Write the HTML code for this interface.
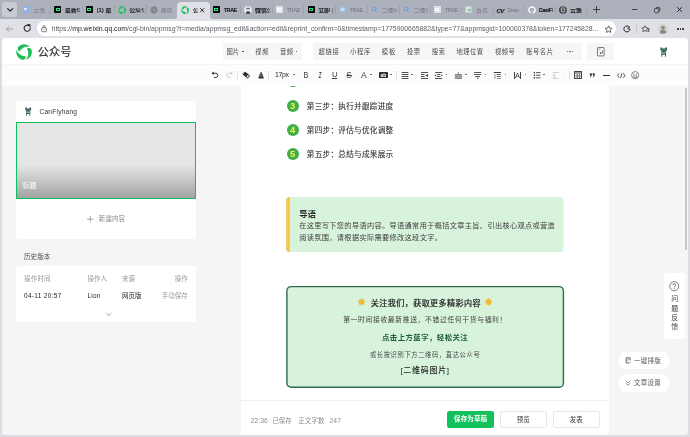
<!DOCTYPE html>
<html lang="zh-CN"><head><meta charset="utf-8"><title>公众号</title>
<style>
*{margin:0;padding:0;box-sizing:border-box}
html,body{width:690px;height:437px;overflow:hidden}
body{position:relative;background:#dbdde2;font-family:"Liberation Sans","Noto Sans CJK SC",sans-serif;color:#333}
.a{position:absolute;white-space:nowrap;line-height:1}
svg{position:absolute;overflow:visible}
#root{position:absolute;left:0;top:0;width:690px;height:437px;will-change:transform}
#tabbar{left:0;top:0;width:690px;height:18.5px;background:#adb1bb}
#addr{left:0;top:18.5px;width:690px;height:20px;background:#dfe1e6}
#pill{left:37px;top:21.4px;width:579.4px;height:15px;border-radius:7.5px;background:#fff}
#acttab{left:177.4px;top:2px;width:32.6px;height:16.5px;background:#dfe1e6;border-radius:4px 4px 0 0}
.flare{top:15.5px;width:3px;height:3px}
.tab{top:7.7px;font-size:5.9px;color:#111;overflow:hidden;height:7px;-webkit-text-stroke:0.2px #111;-webkit-mask-image:linear-gradient(90deg,#000 0,#000 80%,transparent 100%);mask-image:linear-gradient(90deg,#000 0,#000 80%,transparent 100%)}
.tab.f{color:#747880;-webkit-text-stroke:0}
.sep{top:5.3px;width:0.8px;height:8.4px;background:#9fa3ac}
#url{left:51.6px;top:25.7px;font-size:6.87px;color:#5c6066;letter-spacing:0}
#page{left:2px;top:38px;width:686px;height:396.6px;background:#f5f5f5;border-radius:4px 4px 3px 3px;overflow:hidden}
#hdr{left:0;top:0;width:686px;height:26px;background:#fff}
#tbar{left:0;top:26px;width:686px;height:21.5px;background:#fcfcfc;border-top:0.5px solid #f5f5f5}
.grp{top:5px;height:16.8px;background:#f6f6f6;border-radius:1.5px}
.ht{top:10px;font-size:6.3px;color:#4a4a4a}
.dot{width:1.3px;height:1.3px;border-radius:50%;background:#555}
</style></head><body>
<div id="root">
<div class="a" id="tabbar"></div><div class="a flare" style="left:174.4px;background:radial-gradient(circle at 0 0,transparent 2.9px,#dfe1e6 3.1px)"></div><div class="a flare" style="left:210px;background:radial-gradient(circle at 100% 0,transparent 2.9px,#dfe1e6 3.1px)"></div><div class="a" id="addr"></div><div class="a" id="acttab"></div><div class="a" id="pill"></div>
<div class="a" style="left:22.9px;top:6px;width:6.6000000000000005px;height:7.2px;background:#8fb0ee;border-radius:1px"><div class="a" style="left:1.6px;top:1.6px;width:2.4px;height:2px;background:#dfe8fb"></div></div>
<div class="a tab f" style="left:33.6px;width:15.9px">云笺</div>
<div class="a sep" style="left:50.1px"></div>
<div class="a" style="left:54.3px;top:6px;width:7.2px;height:7.2px;background:#0a0a0a;border-radius:0.8px"><div class="a" style="left:1.3px;top:2.1px;width:4.2px;height:2.8px;border:0.7px solid #32f08c;border-radius:0.4px"></div></div>
<div class="a tab" style="left:65.0px;width:16.1px">最新S</div>
<div class="a sep" style="left:81.7px"></div>
<div class="a" style="left:85.9px;top:6px;width:7.2px;height:7.2px;background:#0a0a0a;border-radius:0.8px"><div class="a" style="left:1.3px;top:2.1px;width:4.2px;height:2.8px;border:0.7px solid #32f08c;border-radius:0.4px"></div></div>
<div class="a tab" style="left:96.6px;width:17.1px">(1) 最</div>
<div class="a sep" style="left:114.3px"></div>
<svg style="left:117.8px;top:5.5px" width="8.2" height="8.2" viewBox="0 0 100 100"><g fill="#1fc05a"><path d="M16.7 42.9L13.6 38.6L11.4 33.9L10.4 28.9L10.7 24.2L12.6 20.0L15.5 16.7L18.7 13.6L22.2 10.8L26.0 8.4L30.0 6.4L34.1 4.7L38.4 3.4L42.8 2.5L47.2 2.1L51.7 2.0L56.1 2.4L60.5 3.2L64.8 4.3L69.0 5.9L73.0 7.9L76.8 10.2L80.4 12.9L83.7 15.9L86.8 19.1L86.8 19.1L82.0 17.6L77.3 16.7L72.8 16.2L68.5 16.1L64.5 16.4L60.7 17.0L57.2 17.9L54.0 19.0L51.0 20.2L48.3 21.6L45.9 23.0L43.6 24.5L41.5 25.9L39.5 27.2L37.5 28.3L35.5 29.6L33.7 31.0L32.0 32.6L30.5 34.4L29.1 36.3L27.9 38.3L26.9 40.4L26.1 42.6L25.5 44.8z"/><path d="M72.8 24.7L78.0 24.2L83.3 24.6L88.1 26.2L92.0 28.9L94.7 32.6L96.1 36.8L97.2 41.1L97.8 45.5L98.0 50.0L97.8 54.5L97.2 58.9L96.1 63.2L94.7 67.5L92.9 71.5L90.7 75.4L88.2 79.1L85.3 82.5L82.1 85.7L78.7 88.5L75.0 91.0L71.0 93.1L66.9 94.9L62.7 96.3L58.3 97.3L58.3 97.3L62.0 93.9L65.2 90.3L67.9 86.7L70.1 83.0L71.9 79.4L73.2 75.8L74.2 72.3L74.9 69.0L75.3 65.8L75.4 62.8L75.4 59.9L75.3 57.3L75.1 54.7L75.0 52.3L75.0 50.0L74.9 47.7L74.6 45.4L74.0 43.1L73.3 40.9L72.3 38.8L71.2 36.8L69.9 34.8L68.4 33.1L66.7 31.4z"/><path d="M60.5 82.3L58.4 87.2L55.3 91.5L51.6 94.9L47.3 96.9L42.8 97.4L38.4 96.6L34.1 95.3L30.0 93.6L26.0 91.6L22.2 89.2L18.7 86.4L15.5 83.3L12.5 80.0L9.9 76.4L7.6 72.5L5.7 68.5L4.2 64.3L3.0 60.0L2.3 55.6L2.0 51.1L2.1 46.7L2.6 42.2L3.6 37.8L4.9 33.6L4.9 33.6L6.0 38.5L7.5 43.0L9.3 47.2L11.3 50.9L13.6 54.3L16.0 57.2L18.6 59.8L21.1 62.1L23.7 64.0L26.2 65.6L28.7 67.0L31.1 68.3L33.3 69.4L35.5 70.5L37.5 71.7L39.6 72.7L41.7 73.6L44.0 74.3L46.2 74.7L48.5 75.0L50.9 75.0L53.2 74.8L55.5 74.4L57.7 73.8z"/></g></svg>
<div class="a tab" style="left:129.2px;width:15.9px">公众号</div>
<div class="a sep" style="left:145.7px"></div>
<svg style="left:149.5px;top:5.7px" width="7.800" height="7.800" viewBox="0 0 24 24"><g fill="none" stroke="#747880" stroke-width="2.400"><circle cx="12" cy="12" r="10"/><ellipse cx="12" cy="12" rx="4.5" ry="10"/><path d="M2 12h20M4 6.5h16M4 17.5h16"/></g></svg>
<div class="a tab f" style="left:160.6px;width:16.0px">湖南</div>
<svg style="left:180.70000000000002px;top:5.5px" width="8.2" height="8.2" viewBox="0 0 100 100"><g fill="#1fc05a"><path d="M16.7 42.9L13.6 38.6L11.4 33.9L10.4 28.9L10.7 24.2L12.6 20.0L15.5 16.7L18.7 13.6L22.2 10.8L26.0 8.4L30.0 6.4L34.1 4.7L38.4 3.4L42.8 2.5L47.2 2.1L51.7 2.0L56.1 2.4L60.5 3.2L64.8 4.3L69.0 5.9L73.0 7.9L76.8 10.2L80.4 12.9L83.7 15.9L86.8 19.1L86.8 19.1L82.0 17.6L77.3 16.7L72.8 16.2L68.5 16.1L64.5 16.4L60.7 17.0L57.2 17.9L54.0 19.0L51.0 20.2L48.3 21.6L45.9 23.0L43.6 24.5L41.5 25.9L39.5 27.2L37.5 28.3L35.5 29.6L33.7 31.0L32.0 32.6L30.5 34.4L29.1 36.3L27.9 38.3L26.9 40.4L26.1 42.6L25.5 44.8z"/><path d="M72.8 24.7L78.0 24.2L83.3 24.6L88.1 26.2L92.0 28.9L94.7 32.6L96.1 36.8L97.2 41.1L97.8 45.5L98.0 50.0L97.8 54.5L97.2 58.9L96.1 63.2L94.7 67.5L92.9 71.5L90.7 75.4L88.2 79.1L85.3 82.5L82.1 85.7L78.7 88.5L75.0 91.0L71.0 93.1L66.9 94.9L62.7 96.3L58.3 97.3L58.3 97.3L62.0 93.9L65.2 90.3L67.9 86.7L70.1 83.0L71.9 79.4L73.2 75.8L74.2 72.3L74.9 69.0L75.3 65.8L75.4 62.8L75.4 59.9L75.3 57.3L75.1 54.7L75.0 52.3L75.0 50.0L74.9 47.7L74.6 45.4L74.0 43.1L73.3 40.9L72.3 38.8L71.2 36.8L69.9 34.8L68.4 33.1L66.7 31.4z"/><path d="M60.5 82.3L58.4 87.2L55.3 91.5L51.6 94.9L47.3 96.9L42.8 97.4L38.4 96.6L34.1 95.3L30.0 93.6L26.0 91.6L22.2 89.2L18.7 86.4L15.5 83.3L12.5 80.0L9.9 76.4L7.6 72.5L5.7 68.5L4.2 64.3L3.0 60.0L2.3 55.6L2.0 51.1L2.1 46.7L2.6 42.2L3.6 37.8L4.9 33.6L4.9 33.6L6.0 38.5L7.5 43.0L9.3 47.2L11.3 50.9L13.6 54.3L16.0 57.2L18.6 59.8L21.1 62.1L23.7 64.0L26.2 65.6L28.7 67.0L31.1 68.3L33.3 69.4L35.5 70.5L37.5 71.7L39.6 72.7L41.7 73.6L44.0 74.3L46.2 74.7L48.5 75.0L50.9 75.0L53.2 74.8L55.5 74.4L57.7 73.8z"/></g></svg>
<div class="a tab" style="left:193.1px;width:5.2px">公</div>
<div class="a" style="left:212.9px;top:6px;width:7.2px;height:7.2px;background:#0a0a0a;border-radius:0.8px"><div class="a" style="left:1.3px;top:2.1px;width:4.2px;height:2.8px;border:0.7px solid #32f08c;border-radius:0.4px"></div></div>
<div class="a tab" style="left:223.6px;width:15.9px;font-size:5.7px;letter-spacing:-0.5px;top:7.9px">TRAE</div>
<div class="a sep" style="left:240.1px"></div>
<svg style="left:244.3px;top:5.7px" width="7.8" height="7.8" viewBox="0 0 24 24"><circle cx="12" cy="12" r="12" fill="#dde9f3"/><path d="M6 24c0-6 3-8 6.500-8s6.500 2 6.500 8z" fill="#2b3140"/><circle cx="12.500" cy="11" r="4.400" fill="#efd2bd"/><path d="M7 11c-1-7 11-8 11-1c-2-2.500-5-3-7-2.500c-2 .5-3 2-4 3.500z" fill="#1d1d1f"/></svg>
<div class="a tab" style="left:255.0px;width:16.1px">微信公</div>
<div class="a sep" style="left:271.7px"></div>
<div class="a" style="left:275.9px;top:6px;width:7.2px;height:7.2px;background:#dfe2e6;border-radius:0.8px"><div class="a" style="left:1.3px;top:2.1px;width:4.2px;height:2.8px;border:0.7px solid #fff;border-radius:0.4px"></div></div>
<div class="a tab f" style="left:286.6px;width:16.1px;font-size:5.7px;letter-spacing:-0.5px;top:7.9px">TRAE</div>
<div class="a sep" style="left:303.3px"></div>
<div class="a" style="left:307.5px;top:6px;width:7.2px;height:7.2px;background:#0a0a0a;border-radius:0.8px"><div class="a" style="left:1.3px;top:2.1px;width:4.2px;height:2.8px;border:0.7px solid #32f08c;border-radius:0.4px"></div></div>
<div class="a tab" style="left:318.2px;width:15.9px">立即下</div>
<div class="a sep" style="left:334.7px"></div>
<svg style="left:338.9px;top:6px" width="7.2" height="7.2" viewBox="0 0 24 24"><circle cx="12" cy="12" r="10" fill="#9cc3ee"/><path d="M4 12c4-6 12-6 16 0c-4 5-12 5-16 0z" fill="#d5e6f8"/></svg>
<div class="a tab f" style="left:349.6px;width:16.5px;font-size:5.7px;letter-spacing:-0.5px;top:7.9px">TRAE</div>
<div class="a sep" style="left:366.7px"></div>
<svg style="left:370.9px;top:6px" width="7.2" height="7.2" viewBox="0 0 24 24"><g fill="none" stroke="#5b9ee6" stroke-width="3" stroke-linecap="round"><circle cx="10" cy="10" r="6.5"/><path d="M15 15l6 6"/></g></svg>
<div class="a tab f" style="left:381.6px;width:16.5px">二维码</div>
<div class="a sep" style="left:398.7px"></div>
<svg style="left:402.9px;top:6px" width="7.2" height="7.2" viewBox="0 0 24 24"><g fill="none" stroke="#5b9ee6" stroke-width="3" stroke-linecap="round"><circle cx="10" cy="10" r="6.5"/><path d="M15 15l6 6"/></g></svg>
<div class="a tab f" style="left:413.6px;width:15.5px">二维码</div>
<div class="a sep" style="left:429.7px"></div>
<div class="a" style="left:433.9px;top:6px;width:7.2px;height:7.2px;background:#dfe2e6;border-radius:0.8px"><div class="a" style="left:1.3px;top:2.1px;width:4.2px;height:2.8px;border:0.7px solid #fff;border-radius:0.4px"></div></div>
<div class="a tab f" style="left:444.6px;width:15.9px;font-size:5.7px;letter-spacing:-0.5px;top:7.9px">TRAE</div>
<div class="a sep" style="left:461.1px"></div>
<div class="a" style="left:465.29999999999995px;top:6px;width:7.2px;height:7.2px;background:#d6e6dc;border-radius:1px;border:0.5px solid #b9d3c4"><div class="a" style="left:1.7px;top:2px;width:2.6px;height:2.2px;background:#7dc69a;border-radius:0.4px"></div></div>
<div class="a tab f" style="left:476.0px;width:15.9px">首页</div>
<div class="a sep" style="left:492.5px"></div>
<div class="a" style="left:496.5px;top:7.5px;font-size:6px;font-weight:bold;font-style:italic;color:#2e3136;letter-spacing:-0.5px;-webkit-text-stroke:0.25px #2e3136">CV</div>
<div class="a tab f" style="left:507.4px;width:15.7px;font-size:5.7px;letter-spacing:-0.5px;top:7.9px">Deep</div>
<div class="a sep" style="left:523.7px"></div>
<svg style="left:527.6px;top:5.7px" width="8.0" height="8.0" viewBox="0 0 24 24"><path fill="#fff" d="M12 .5C5.65.5.5 5.65.5 12c0 5.1 3.3 9.400 7.900 10.900.6.100.8-.25.800-.55v-2c-3.200.7-3.900-1.550-3.900-1.550-.5-1.350-1.300-1.700-1.300-1.700-1.050-.7.100-.7.100-.7 1.150.1 1.750 1.200 1.750 1.200 1 1.750 2.700 1.250 3.350.95.100-.75.400-1.250.7-1.550-2.550-.3-5.250-1.300-5.250-5.700 0-1.250.45-2.300 1.200-3.100-.1-.3-.5-1.450.100-3.050 0 0 .950-.3 3.150 1.200.9-.25 1.900-.4 2.900-.4s2 .15 2.900.4c2.200-1.500 3.150-1.200 3.150-1.200.6 1.600.2 2.750.1 3.050.75.800 1.200 1.850 1.200 3.100 0 4.400-2.700 5.400-5.250 5.700.4.350.8 1.050.8 2.100v3.150c0 .3.200.65.800.55C20.200 21.400 23.500 17.100 23.500 12 23.500 5.650 18.350.5 12 .5z"/></svg>
<div class="a tab" style="left:538.6px;width:15.9px;font-size:5.7px;letter-spacing:-0.5px;top:7.9px;font-weight:bold;letter-spacing:-0.25px">CanFl</div>
<div class="a sep" style="left:555.1px"></div>
<svg style="left:559.3px;top:6px" width="7.8" height="7.8" viewBox="0 0 24 24"><circle cx="12" cy="12" r="11.5" fill="#1a1a1a"/><g fill="none" stroke="#e8e8e8" stroke-width="1.8"><ellipse cx="12" cy="12" rx="4.5" ry="10"/><path d="M2 12h20M4 6.5h16M4 17.5h16"/></g></svg>
<div class="a tab" style="left:570.0px;width:15.7px">云笺</div>
<div class="a sep" style="left:586.3px"></div>
<div class="a" style="left:2.2px;top:2.2px;width:14.8px;height:14.8px;background:#c8cbd1;border-radius:3px"></div>
<svg style="left:6.5px;top:8.1px" width="6.300" height="3.800" viewBox="0 0 10 6"><path d="M1 1l4 4 4-4" fill="none" stroke="#222" stroke-width="1.800" stroke-linecap="round" stroke-linejoin="round"/></svg>
<svg style="left:199.900px;top:7.600px" width="4.400" height="4.400" viewBox="0 0 10 10"><path d="M1 1l8 8M9 1l-8 8" stroke="#111" stroke-width="2" stroke-linecap="round"/></svg>
<svg style="left:592.7px;top:6.2px" width="7" height="7" viewBox="0 0 10 10"><path d="M5 0v10M0 5h10" stroke="#222" stroke-width="1.1"/></svg>
<svg style="left:632px;top:9.2px" width="5.2" height="1" viewBox="0 0 10 2"><path d="M0 1h10" stroke="#222" stroke-width="1.6"/></svg>
<svg style="left:653.700px;top:6.600px" width="6.200" height="6.200" viewBox="0 0 10 10"><rect x="0.8" y="2.4" width="6.800" height="6.800" rx="1.600" fill="none" stroke="#222" stroke-width="1.200"/><path d="M3 2.2V2a1.400 1.400 0 0 1 1.400-1.400h3.200A1.800 1.800 0 0 1 9.400 2.400v3.200A1.400 1.400 0 0 1 8 7" fill="none" stroke="#222" stroke-width="1.200"/></svg>
<svg style="left:676.6px;top:7.2px" width="5" height="5" viewBox="0 0 10 10"><path d="M0.500 0.500l9 9M9.500 0.500l-9 9" stroke="#1a1a1a" stroke-width="1.900"/></svg>
<svg style="left:6px;top:25.7px" width="7.2" height="6" viewBox="0 0 12 10"><path d="M5 1L1 5l4 4M1 5h10.500" fill="none" stroke="#8b8e94" stroke-width="1.25" stroke-linecap="round" stroke-linejoin="round"/></svg>
<svg style="left:22.800px;top:24.400px" width="8.400" height="8.400" viewBox="0 0 12 12"><path d="M10.400 6A4.400 4.400 0 1 1 8.900 2.700" fill="none" stroke="#222" stroke-width="1.500" stroke-linecap="round"/><path d="M6.900 1.100h3.100v3.100" fill="none" stroke="#222" stroke-width="1.500" stroke-linecap="round" stroke-linejoin="round"/></svg>
<svg style="left:41px;top:24.700px" width="6.200" height="7.300" viewBox="0 0 10 12"><rect x="1" y="4.600" width="8" height="6.400" rx="1.300" fill="none" stroke="#444" stroke-width="1.100"/><path d="M3 4.600V3a2 2 0 0 1 4 0v1.600" fill="none" stroke="#444" stroke-width="1.100"/><circle cx="5" cy="7.800" r="0.800" fill="#444"/></svg>
<div class="a" id="url">https://<span style="color:#1d1d1d">mp.weixin.qq.com</span>/cgi-bin/appmsg?t=media/appmsg_edit&amp;action=edit&amp;reprint_confirm=0&amp;timestamp=1775900665882&amp;type=77&amp;appmsgid=100000378&amp;token=177245828...</div>
<svg style="left:603.900px;top:24.500px" width="9.200" height="8.600" viewBox="0 0 24 24"><path d="M12 2.500l2.900 6.200 6.600.8-4.900 4.600 1.300 6.700L12 17.500l-5.900 3.300 1.300-6.700-4.900-4.600 6.600-.8z" fill="none" stroke="#333" stroke-width="2" stroke-linejoin="round"/></svg>
<svg style="left:622.600px;top:25.200px" width="7.800" height="7.800" viewBox="0 0 24 24"><path d="M19.500 6.500A9.300 9.300 0 1 0 21.200 13.500" fill="none" stroke="#222" stroke-width="3" stroke-linecap="round"/><path d="M21.500 13.500L14 10.500l5.500-4" fill="none" stroke="#222" stroke-width="2.600" stroke-linejoin="round" stroke-linecap="round"/></svg>
<div class="a" style="left:635.500px;top:24.600px;width:1px;height:8.600px;background:#c6c8ce"></div>
<svg style="left:640.800px;top:25.200px" width="8.800" height="7.800" viewBox="0 0 26 24"><path d="M11.500 2l3 6.300 6.800.8-5 4.700 1.300 6.800-6.100-3.400-6.100 3.400 1.300-6.800-5-4.700 6.800-.8z" fill="none" stroke="#2a2a2a" stroke-width="2.100" stroke-linejoin="round"/><path d="M18.500 11.500h6.500M19 15.200h6M19.500 19h5.500" stroke="#2a2a2a" stroke-width="1.800"/><path d="M17 10.500h4v10h-4z" fill="#dfe1e6"/><path d="M18.500 11.500h6.500M18.500 15.200h6.500M19 19h6" stroke="#2a2a2a" stroke-width="1.800"/></svg>
<svg style="left:658.300px;top:24.200px" width="10" height="10" viewBox="0 0 24 24"><circle cx="12" cy="12" r="12" fill="#d5d3d1"/><circle cx="12" cy="9" r="4.600" fill="#8d8a87"/><path d="M3.500 20.500c1-5 5-6.500 8.500-6.500s7.500 1.500 8.500 6.500A12 12 0 0 1 3.500 20.500z" fill="#8d8a87"/></svg>
<div class="a" style="left:677.0px;top:28px;width:1.500px;height:1.500px;border-radius:50%;background:#222"></div>
<div class="a" style="left:679.6px;top:28px;width:1.500px;height:1.500px;border-radius:50%;background:#222"></div>
<div class="a" style="left:682.2px;top:28px;width:1.500px;height:1.500px;border-radius:50%;background:#222"></div>
<div class="a" id="page">
<div class="a" id="hdr"></div><div class="a" id="tbar"></div>
<svg style="left:13.90px;top:5.60px" width="16.2" height="16.2" viewBox="0 0 100 100"><g fill="#1ebe57"><path d="M16.7 42.9L13.6 38.6L11.4 33.9L10.4 28.9L10.7 24.2L12.6 20.0L15.5 16.7L18.7 13.6L22.2 10.8L26.0 8.4L30.0 6.4L34.1 4.7L38.4 3.4L42.8 2.5L47.2 2.1L51.7 2.0L56.1 2.4L60.5 3.2L64.8 4.3L69.0 5.9L73.0 7.9L76.8 10.2L80.4 12.9L83.7 15.9L86.8 19.1L86.8 19.1L82.0 17.6L77.3 16.7L72.8 16.2L68.5 16.1L64.5 16.4L60.7 17.0L57.2 17.9L54.0 19.0L51.0 20.2L48.3 21.6L45.9 23.0L43.6 24.5L41.5 25.9L39.5 27.2L37.5 28.3L35.5 29.6L33.7 31.0L32.0 32.6L30.5 34.4L29.1 36.3L27.9 38.3L26.9 40.4L26.1 42.6L25.5 44.8z"/><path d="M72.8 24.7L78.0 24.2L83.3 24.6L88.1 26.2L92.0 28.9L94.7 32.6L96.1 36.8L97.2 41.1L97.8 45.5L98.0 50.0L97.8 54.5L97.2 58.9L96.1 63.2L94.7 67.5L92.9 71.5L90.7 75.4L88.2 79.1L85.3 82.5L82.1 85.7L78.7 88.5L75.0 91.0L71.0 93.1L66.9 94.9L62.7 96.3L58.3 97.3L58.3 97.3L62.0 93.9L65.2 90.3L67.9 86.7L70.1 83.0L71.9 79.4L73.2 75.8L74.2 72.3L74.9 69.0L75.3 65.8L75.4 62.8L75.4 59.9L75.3 57.3L75.1 54.7L75.0 52.3L75.0 50.0L74.9 47.7L74.6 45.4L74.0 43.1L73.3 40.9L72.3 38.8L71.2 36.8L69.9 34.8L68.4 33.1L66.7 31.4z"/><path d="M60.5 82.3L58.4 87.2L55.3 91.5L51.6 94.9L47.3 96.9L42.8 97.4L38.4 96.6L34.1 95.3L30.0 93.6L26.0 91.6L22.2 89.2L18.7 86.4L15.5 83.3L12.5 80.0L9.9 76.4L7.6 72.5L5.7 68.5L4.2 64.3L3.0 60.0L2.3 55.6L2.0 51.1L2.1 46.7L2.6 42.2L3.6 37.8L4.9 33.6L4.9 33.6L6.0 38.5L7.5 43.0L9.3 47.2L11.3 50.9L13.6 54.3L16.0 57.2L18.6 59.8L21.1 62.1L23.7 64.0L26.2 65.6L28.7 67.0L31.1 68.3L33.3 69.4L35.5 70.5L37.5 71.7L39.6 72.7L41.7 73.6L44.0 74.3L46.2 74.7L48.5 75.0L50.9 75.0L53.2 74.8L55.5 74.4L57.7 73.8z"/></g></svg>
<div class="a" style="left:35.80px;top:8.60px;font-size:11.2px;font-weight:400;color:#333;letter-spacing:0px;-webkit-text-stroke:0.22px #333">公众号</div>
<div class="a grp" style="left:220.5px;width:79.0px"></div>
<div class="a grp" style="left:311.0px;width:268.8px"></div>
<div class="a grp" style="left:585.0px;width:26.5px"></div>
<div class="a ht" style="left:224.50px;top:11.30px;letter-spacing:-0.10px">图片</div>
<div class="a ht" style="left:253.20px;top:11.30px;letter-spacing:0.80px">视频</div>
<div class="a ht" style="left:278.00px;top:11.30px;letter-spacing:0.40px">音频</div>
<div class="a ht" style="left:316.60px;top:11.30px;letter-spacing:0.60px">超链接</div>
<div class="a ht" style="left:348.00px;top:11.30px;letter-spacing:0.70px">小程序</div>
<div class="a ht" style="left:379.80px;top:11.30px;letter-spacing:0.80px">模板</div>
<div class="a ht" style="left:404.90px;top:11.30px;letter-spacing:0.50px">投票</div>
<div class="a ht" style="left:429.70px;top:11.30px;letter-spacing:0.70px">搜索</div>
<div class="a ht" style="left:454.60px;top:11.30px;letter-spacing:0.40px">地理位置</div>
<div class="a ht" style="left:492.90px;top:11.30px;letter-spacing:0.45px">视频号</div>
<div class="a ht" style="left:524.20px;top:11.30px;letter-spacing:0.53px">账号名片</div>
<div class="a" style="left:240.40px;top:13.20px;width:1.2px;height:1.2px;border-radius:50%;background:#444"></div>
<div class="a" style="left:293.80px;top:13.20px;width:1.2px;height:1.2px;border-radius:50%;background:#444"></div>
<div class="a" style="left:564.80px;top:13.20px;width:1.2px;height:1.2px;border-radius:50%;background:#555"></div>
<div class="a" style="left:567.40px;top:13.20px;width:1.2px;height:1.2px;border-radius:50%;background:#555"></div>
<div class="a" style="left:570.00px;top:13.20px;width:1.2px;height:1.2px;border-radius:50%;background:#555"></div>
<svg style="left:594.60px;top:9.00px" width="7.600" height="9.400" viewBox="0 0 16 20"><rect x="1" y="1" width="14" height="18" rx="1.500" fill="none" stroke="#444" stroke-width="1.500"/><path d="M4 4.500h3M11.500 8v5h-5M8.500 10.800L6.300 13l2.200 2.200" fill="none" stroke="#444" stroke-width="1.400"/></svg>
<svg style="left:656.60px;top:9.40px" width="9.4" height="10.34" viewBox="0 0 10 10" preserveAspectRatio="none"><path d="M1.500 0.500h2v1h3V0.500h2v3h-1v6H6.500V7.500h-3V9.500H2.500V3.500h-1z" fill="#3d5a63"/><path d="M3 2.200h1.200v1.800H3zM5.800 2.200H7v1.800H5.800z" fill="#2fae5a"/><path d="M3.200 5h3.600v1.600H3.200z" fill="#9fb2b5"/></svg>
<svg style="left:209.10px;top:33.40px" width="7.6" height="7.6" viewBox="0 0 13.500 12.500"><path d="M3.200 3.600h5.300a3.700 3.700 0 0 1 0 7.400H5.200" fill="none" stroke="#2e2e2e" stroke-width="1.700"/><path d="M4.800 0.600L1 3.600l3.800 3z" fill="#2e2e2e"/></svg>
<svg style="left:223.50px;top:33.40px;transform:scaleX(-1)" width="7.600" height="7.600" viewBox="0 0 13.500 12.500"><path d="M3.200 3.600h5.300a3.700 3.700 0 0 1 0 7.400H5.200" fill="none" stroke="#cdcdcd" stroke-width="1.700"/><path d="M4.800 0.600L1 3.600l3.800 3z" fill="#cdcdcd"/></svg>
<div class="a" style="left:235.30px;top:32.60px;width:0.8px;height:9.2px;background:#e4e4e4"></div>
<div class="a" style="left:266.40px;top:32.60px;width:0.8px;height:9.2px;background:#e4e4e4"></div>
<div class="a" style="left:394.00px;top:32.60px;width:0.8px;height:9.2px;background:#e4e4e4"></div>
<div class="a" style="left:567.20px;top:32.60px;width:0.8px;height:9.2px;background:#e4e4e4"></div>
<svg style="left:239.60px;top:33.00px" width="8.6" height="8.2" viewBox="0 0 17 16"><g transform="rotate(38 8.500 8)"><rect x="2.200" y="4" width="13" height="7.600" rx="1.300" fill="#2e2e2e"/><rect x="10.800" y="5.300" width="2.400" height="5" fill="#fcfcfc"/></g><path d="M2.600 3.400L1 5" stroke="#2e2e2e" stroke-width="1.500"/></svg>
<svg style="left:255.60px;top:33.60px" width="6.2" height="6.8" viewBox="0 0 12 13"><path d="M4.600 0.500h2.800v3.600h1.900l1.900 8.400H.800l1.900-8.400h1.900z" fill="#2e2e2e"/><path d="M2 7.300h8" stroke="#fcfcfc" stroke-width="1"/></svg>
<div class="a" style="left:273.00px;top:33.80px;font-size:6.9px;letter-spacing:-0.32px;color:#262626">17px</div>
<div class="a" style="left:291.38px;top:36.03px;width:1.44px;height:1.44px;border-radius:50%;background:#5a5a5a"></div>
<div class="a" style="left:299.20px;top:33.05px;width:10px;text-align:center;font-size:8.3px;color:#3a3a3a;transform:scaleX(0.86)">B</div>
<div class="a" style="left:313.20px;top:34.20px;width:10px;text-align:center;font-size:8.3px;color:#3a3a3a;font-style:italic;font-family:'Liberation Mono',monospace;transform:scaleX(0.8)">I</div>
<div class="a" style="left:327.70px;top:33.10px;width:10px;text-align:center;font-size:7.6px;color:#3a3a3a;">U</div>
<div class="a" style="left:330.20px;top:40.30px;width:5px;height:0.8px;background:#3a3a3a"></div>
<div class="a" style="left:342.10px;top:33.05px;width:10px;text-align:center;font-size:8.3px;color:#3a3a3a;text-decoration:line-through;text-decoration-thickness:0.700px">S</div>
<div class="a" style="left:356.80px;top:32.90px;width:10px;text-align:center;font-size:8.6px;color:#3a3a3a;">A</div>
<div class="a" style="left:368.28px;top:36.03px;width:1.44px;height:1.44px;border-radius:50%;background:#5a5a5a"></div>
<div class="a" style="left:377.10px;top:33.90px;width:8.600px;height:6.600px;background:#2e2e2e;border-radius:0.700px;color:#fff;font-size:5px;text-align:center;line-height:6px;font-weight:bold">ab</div>
<div class="a" style="left:388.08px;top:36.03px;width:1.44px;height:1.44px;border-radius:50%;background:#5a5a5a"></div>
<svg style="left:399px;top:33px" width="10" height="10" viewBox="0 0 10 10"><rect x="0.6" y="1" width="6.8" height="1" fill="#555"/><rect x="0.6" y="3" width="6.8" height="1" fill="#555"/><rect x="0.6" y="5" width="6.8" height="1" fill="#555"/><rect x="0.6" y="7" width="6.8" height="1" fill="#555"/></svg>
<div class="a" style="left:409.48px;top:36.03px;width:1.44px;height:1.44px;border-radius:50%;background:#5a5a5a"></div>
<svg style="left:418px;top:33px" width="10" height="10" viewBox="0 0 10 10"><rect x="0.9" y="1" width="7.1" height="1" fill="#555"/><rect x="0.9" y="7" width="7.1" height="1" fill="#555"/><rect x="0.9" y="3" width="3.7" height="1" fill="#555"/><rect x="0.9" y="5" width="3.7" height="1" fill="#555"/><path d="M5.500 4.500L8 3.100v2.800z" fill="#333"/></svg>
<svg style="left:432px;top:33px" width="10" height="10" viewBox="0 0 10 10"><rect x="1" y="1" width="7.2" height="1" fill="#555"/><rect x="1" y="7" width="7.2" height="1" fill="#555"/><rect x="2.8" y="3" width="3.6" height="1" fill="#555"/><rect x="2.8" y="5" width="3.6" height="1" fill="#555"/><path d="M1 3.600l1.300.9L1 5.400zM8.200 3.600l-1.300.9 1.300.9z" fill="#333"/></svg>
<div class="a" style="left:443.78px;top:36.03px;width:1.44px;height:1.44px;border-radius:50%;background:#5a5a5a"></div>
<svg style="left:452px;top:33px" width="10" height="10" viewBox="0 0 10 10"><path d="M3.700 2.400l.8-1.300.8 1.300z" fill="#444"/><rect x="0.900" y="3.100" width="7.100" height="4.800" fill="#a9a9a9"/><rect x="0.9" y="3.1" width="7.1" height="0.8" fill="#7a7a7a"/><rect x="0.9" y="5.1" width="7.1" height="0.7" fill="#8a8a8a"/><rect x="0.9" y="7.1" width="7.1" height="0.8" fill="#7a7a7a"/></svg>
<div class="a" style="left:463.48px;top:36.03px;width:1.44px;height:1.44px;border-radius:50%;background:#5a5a5a"></div>
<svg style="left:471px;top:33px" width="10" height="10" viewBox="0 0 10 10"><rect x="1.1" y="1" width="7.1" height="1" fill="#555"/><rect x="1.1" y="3" width="7.1" height="1" fill="#555"/><rect x="2.3" y="5" width="4.7" height="1" fill="#555"/><path d="M3.600 6.800h2.200L4.700 8.200z" fill="#444"/></svg>
<div class="a" style="left:482.98px;top:36.03px;width:1.44px;height:1.44px;border-radius:50%;background:#5a5a5a"></div>
<svg style="left:491px;top:33px" width="10" height="10" viewBox="0 0 10 10"><rect x="0.8" y="1" width="7.1" height="1" fill="#3a3a3a"/><rect x="0.800" y="3" width="2.200" height="5" fill="#c9c9c9"/><rect x="3.8" y="3" width="4.1" height="1" fill="#6a6a6a"/><rect x="3.8" y="5" width="4.1" height="1" fill="#6a6a6a"/><rect x="3.8" y="7" width="4.1" height="1" fill="#8a8a8a"/></svg>
<div class="a" style="left:502.58px;top:36.03px;width:1.44px;height:1.44px;border-radius:50%;background:#5a5a5a"></div>
<div class="a" style="left:511.70px;top:33.90px;width:0.9px;height:7px;background:#444"></div>
<div class="a" style="left:518.40px;top:33.90px;width:0.9px;height:7px;background:#444"></div>
<div class="a" style="left:510.50px;top:33.70px;width:10px;text-align:center;font-size:7.200px;color:#333">A</div>
<div class="a" style="left:522.58px;top:36.03px;width:1.44px;height:1.44px;border-radius:50%;background:#5a5a5a"></div>
<svg style="left:531px;top:33px" width="10" height="10" viewBox="0 0 10 10"><rect x="0.700" y="0.9" width="1.400" height="1.400" fill="#3a3a3a"/><rect x="3" y="1.1" width="4.5" height="1" fill="#555"/><rect x="0.700" y="3.5" width="1.400" height="1.400" fill="#3a3a3a"/><rect x="3" y="3.7" width="4.5" height="1" fill="#555"/><rect x="0.700" y="6.1" width="1.400" height="1.400" fill="#3a3a3a"/><rect x="3" y="6.3" width="4.5" height="1" fill="#555"/></svg>
<div class="a" style="left:541.28px;top:36.03px;width:1.44px;height:1.44px;border-radius:50%;background:#5a5a5a"></div>
<svg style="left:550px;top:33px" width="10" height="10" viewBox="0 0 10 10"><rect x="0.7" y="1" width="6.6" height="1" fill="#d4d4d4"/><rect x="0.700" y="2.700" width="3" height="4" fill="#dedede"/><rect x="0.7" y="7" width="6.6" height="1" fill="#d4d4d4"/></svg>
<div class="a" style="left:560.58px;top:36.03px;width:1.44px;height:1.44px;border-radius:50%;background:#d0d0d0"></div>
<svg style="left:572px;top:33px" width="10" height="10" viewBox="0 0 10 10"><rect x="0.500" y="0.500" width="7" height="7" fill="#fff" stroke="#444" stroke-width="1"/><rect x="1" y="1" width="6" height="1.800" fill="#9a9a9a"/><path d="M3.100 2.800v4.200M5.300 2.800v4.200" stroke="#4a4a4a" stroke-width="0.900"/><path d="M1 5h6" stroke="#6a6a6a" stroke-width="0.800"/></svg>
<svg style="left:586.75px;top:35.15px" width="6.4" height="4.7" viewBox="0 0 14 11"><path d="M1 3.200a2.700 2.700 0 1 1 5.400 0c0 3.300-1.700 5.600-4.200 7.300l-.9-1c1.300-1 2.100-2.100 2.300-3.700A2.700 2.700 0 0 1 1 3.200zM7.800 3.200a2.700 2.700 0 1 1 5.400 0c0 3.300-1.700 5.600-4.200 7.300l-.9-1c1.300-1 2.100-2.100 2.300-3.700A2.700 2.700 0 0 1 7.800 3.200z" fill="#262626"/></svg>
<div class="a" style="left:601.00px;top:37.00px;width:7px;height:1.100px;background:#333"></div>
<svg style="left:614.75px;top:34.85px" width="8.6" height="5.2" viewBox="0 0 18 11"><path d="M4.500 1L1 5.500 4.500 10M13.500 1L17 5.500 13.500 10M10.500 0.500L7.500 10.500" fill="none" stroke="#2a2a2a" stroke-width="1.700"/></svg>
<svg style="left:628.85px;top:32.95px" width="8.4" height="8.4" viewBox="0 0 16 16"><circle cx="8" cy="8" r="7" fill="none" stroke="#3a3a3a" stroke-width="1.100"/><path d="M5.400 4.600v3M10.600 4.600v3M4.600 9.400h6.800v.8a2.600 2.600 0 0 1-2.600 2.600H7.200a2.600 2.600 0 0 1-2.600-2.600z" fill="none" stroke="#3a3a3a" stroke-width="1.050"/></svg>
<div class="a" style="left:14.00px;top:62.60px;width:179.5px;height:138.4px;background:#fff;border-radius:2.5px"></div>
<svg style="left:22.40px;top:69.40px" width="8.4" height="9.24" viewBox="0 0 10 10" preserveAspectRatio="none"><path d="M1.500 0.500h2v1h3V0.500h2v3h-1v6H6.500V7.500h-3V9.500H2.500V3.500h-1z" fill="#3d5a63"/><path d="M3 2.200h1.200v1.800H3zM5.800 2.200H7v1.800H5.800z" fill="#2fae5a"/><path d="M3.200 5h3.600v1.600H3.200z" fill="#9fb2b5"/></svg>
<div class="a" style="left:37.50px;top:70.90px;font-size:6.6px;letter-spacing:0.22px;color:#333">CanFlyhang</div>
<div class="a" style="left:14.00px;top:83.80px;width:179.5px;height:76.8px;border:1px solid #0fc05f;background:linear-gradient(#e6e6e6 0%,#e6e6e6 55%,#c6c6c6 77%,#a2a2a2 100%)"></div>
<div class="a" style="left:20.60px;top:144.00px;font-size:7px;color:#fff">标题</div>
<svg style="left:85.20px;top:177.70px" width="6.400" height="6.400" viewBox="0 0 10 10"><path d="M5 0v10M0 5h10" stroke="#777" stroke-width="1"/></svg>
<div class="a" style="left:96.80px;top:178.00px;font-size:6.5px;color:#8a8a8a;letter-spacing:0.1px">新建内容</div>
<div class="a" style="left:22.00px;top:215.90px;font-size:6.6px;color:#4d4d4d">历史版本</div>
<div class="a" style="left:14.00px;top:228.00px;width:179.700px;height:55.500px;background:#fff;border-radius:2.500px"></div>
<div class="a" style="left:22.00px;top:237.50px;font-size:6.5px;color:#9a9a9a;letter-spacing:0.2px">操作时间</div>
<div class="a" style="left:85.50px;top:237.50px;font-size:6.5px;color:#9a9a9a">操作人</div>
<div class="a" style="left:119.90px;top:237.50px;font-size:6.5px;color:#9a9a9a">来源</div>
<div class="a" style="left:158.00px;top:237.50px;width:27.800px;text-align:right;font-size:6.5px;color:#9a9a9a">操作</div>
<div class="a" style="left:22.00px;top:254.70px;font-size:6.4px;letter-spacing:0.36px;color:#222">04-11 20:57</div>
<div class="a" style="left:85.50px;top:254.70px;font-size:6.4px;letter-spacing:0.25px;color:#222">Lion</div>
<div class="a" style="left:119.90px;top:255.30px;font-size:6.5px;color:#222">网页版</div>
<div class="a" style="left:158.00px;top:255.30px;width:27.800px;text-align:right;font-size:6.5px;color:#9a9a9a">手动保存</div>
<svg style="left:104.40px;top:275.20px" width="5.600" height="3" viewBox="0 0 10 5.500"><path d="M0.600 0.600L5 4.600 9.400 0.600" fill="none" stroke="#6a6a6a" stroke-width="1.200"/></svg>
<div class="a" style="left:239.20px;top:47.50px;width:368.2px;height:350px;background:#fff"></div>
<div class="a" style="left:284.50px;top:47.50px;width:12.400px;height:2px;overflow:hidden"><div class="a" style="left:0;top:-11.400px;width:12.400px;height:12.400px;border-radius:50%;background:#3eae49"></div></div>
<div class="a" style="left:284.50px;top:61.50px;width:12.4px;height:12.4px;border-radius:50%;background:#3eae49;color:#ffee4a;font-size:9.4px;font-weight:bold;text-align:center;line-height:12.600px">3</div>
<div class="a" style="left:304.80px;top:64.50px;font-size:7.64px;letter-spacing:0.25px;color:#2f2f2f;-webkit-text-stroke:0.1px #2f2f2f">第三步：执行并跟踪进度</div>
<div class="a" style="left:284.50px;top:85.80px;width:12.4px;height:12.4px;border-radius:50%;background:#3eae49;color:#ffee4a;font-size:9.4px;font-weight:bold;text-align:center;line-height:12.600px">4</div>
<div class="a" style="left:304.80px;top:88.80px;font-size:7.64px;letter-spacing:0.25px;color:#2f2f2f;-webkit-text-stroke:0.1px #2f2f2f">第四步：评估与优化调整</div>
<div class="a" style="left:284.50px;top:110.10px;width:12.4px;height:12.4px;border-radius:50%;background:#3eae49;color:#ffee4a;font-size:9.4px;font-weight:bold;text-align:center;line-height:12.600px">5</div>
<div class="a" style="left:304.80px;top:113.10px;font-size:7.64px;letter-spacing:0.25px;color:#2f2f2f;-webkit-text-stroke:0.1px #2f2f2f">第五步：总结与成果展示</div>
<svg style="left:284.00px;top:158.00px" width="279" height="58" viewBox="0 0 279 58"><defs><clipPath id="c1"><rect x="0.200" y="0.900" width="277.300" height="55.100" rx="3.600"/></clipPath></defs><g clip-path="url(#c1)"><rect x="0" y="0" width="279" height="58" fill="#d8f3dc"/><rect x="0" y="0" width="3.800" height="58" fill="#f9c546"/></g></svg>
<div class="a" style="left:297.20px;top:171.90px;font-size:8.45px;font-weight:bold;color:#2b2b2b">导语</div>
<div class="a" style="left:297.20px;top:184.10px;font-size:7.19px;letter-spacing:0.340px;color:#3d3d3d">在这里写下您的导语内容。导语通常用于概括文章主旨、引出核心观点或营造</div>
<div class="a" style="left:297.20px;top:195.90px;font-size:7.19px;letter-spacing:0.340px;color:#3d3d3d">阅读氛围，请根据实际需要修改这段文字。</div>
<svg style="left:284.00px;top:247.00px" width="279" height="103" viewBox="0 0 279 103"><rect x="0.900" y="1.600" width="276.500" height="100.700" rx="4.300" fill="#d8f3dc" stroke="#2f6b51" stroke-width="1.400"/></svg>
<div class="a" style="left:284.40px;top:261.85px;width:277.400px;text-align:center;font-size:8.09px;letter-spacing:0.4px;font-weight:400;color:#1e1e1e;-webkit-text-stroke:0.22px #1e1e1e"><span style="color:#f4b731;font-size:10.5px;letter-spacing:0;line-height:0;vertical-align:-0.6px;-webkit-text-stroke:0;margin-right:4.400px">&#10040;</span>关注我们，获取更多精彩内容<span style="color:#f4b731;font-size:10.5px;letter-spacing:0;line-height:0;vertical-align:-0.6px;-webkit-text-stroke:0;margin-left:2.800px">&#10040;</span></div>
<div class="a" style="left:284.40px;top:278.90px;width:277.400px;text-align:center;font-size:6.8px;letter-spacing:0.65px;color:#3d3d3d">第一时间接收最新推送，不错过任何干货与福利！</div>
<div class="a" style="left:284.40px;top:296.00px;width:277.400px;text-align:center;font-size:7.4px;letter-spacing:0.45px;font-weight:bold;color:#1b5e3a">点击上方蓝字，轻松关注</div>
<div class="a" style="left:284.40px;top:313.75px;width:277.400px;text-align:center;font-size:6.29px;letter-spacing:0.62px;color:#4a4a4a">或长按识别下方二维码，直达公众号</div>
<div class="a" style="left:284.40px;top:328.90px;width:277.400px;text-align:center;font-size:8.0px;letter-spacing:0.7px;color:#222;font-weight:500">[二维码图片]</div>
<div class="a" style="left:239.20px;top:362.20px;width:368.200px;height:35px;background:#fff;border-top:0.600px solid #f0f0f0"></div>
<div class="a" style="left:248.80px;top:380.10px;font-size:6.8px;color:#8c8c8c">22:36</div>
<div class="a" style="left:270.40px;top:379.60px;font-size:6.4px;color:#8c8c8c">已保存</div>
<div class="a" style="left:296.50px;top:379.60px;font-size:6.4px;color:#8c8c8c;letter-spacing:0.100px">正文字数</div>
<div class="a" style="left:327.60px;top:380.10px;font-size:6.8px;color:#8c8c8c">247</div>
<div class="a" style="left:445.00px;top:372.80px;width:47.200px;height:17.200px;background:#10c15c;border-radius:2.200px;color:#fff;font-size:6.5px;font-weight:bold;text-align:center;line-height:16.600px;letter-spacing:0.100px">保存为草稿</div>
<div class="a" style="left:497.60px;top:372.80px;width:47.400px;height:17.200px;background:#fff;border:0.600px solid #e6e6e6;border-radius:2.200px;color:#333;font-size:6.5px;text-align:center;line-height:15.800px">预览</div>
<div class="a" style="left:550.60px;top:372.80px;width:47.400px;height:17.200px;background:#fff;border:0.600px solid #e6e6e6;border-radius:2.200px;color:#333;font-size:6.5px;text-align:center;line-height:15.800px">发表</div>
<div class="a" style="left:682.80px;top:50.00px;width:2.600px;height:162px;background:#c6c6c8"></div>
<div class="a" style="left:662.00px;top:235.00px;width:21.400px;height:66px;background:#fff;border-radius:2.500px"></div>
<svg style="left:667.40px;top:243.20px" width="10.400" height="10.400" viewBox="0 0 18 18"><circle cx="9" cy="9" r="7.800" fill="none" stroke="#555" stroke-width="1.300"/><path d="M6.500 7.200a2.500 2.500 0 1 1 3.600 2.200c-.8.500-1.100.9-1.100 1.700" fill="none" stroke="#555" stroke-width="1.300"/><circle cx="9" cy="13.200" r="0.900" fill="#555"/></svg>
<div class="a" style="left:669.30px;top:258.20px;font-size:6.900px;color:#444">问</div>
<div class="a" style="left:669.30px;top:267.60px;font-size:6.900px;color:#444">题</div>
<div class="a" style="left:669.30px;top:277.00px;font-size:6.900px;color:#444">反</div>
<div class="a" style="left:669.30px;top:286.40px;font-size:6.900px;color:#444">馈</div>
<div class="a" style="left:616.20px;top:313.90px;width:51.500px;height:17.600px;background:#fff;border-radius:8.800px"></div>
<svg style="left:623.20px;top:319.40px" width="6.600" height="6.800" viewBox="0 0 14 14"><path d="M9 12.500H2.500V1.500h8.500V7" fill="none" stroke="#444" stroke-width="1.700"/><path d="M5 4.500h3.500M5 7.500h2" stroke="#555" stroke-width="1.200"/><path d="M10 9.500l2.500 1.500-2.500 1.500z" fill="#555"/></svg>
<div class="a" style="left:631.90px;top:319.80px;font-size:6.5px;color:#555;letter-spacing:0.300px">一键排版</div>
<div class="a" style="left:616.20px;top:336.20px;width:51.500px;height:17.600px;background:#fff;border-radius:8.800px"></div>
<svg style="left:623.40px;top:342.20px" width="6" height="6" viewBox="0 0 12 12"><path d="M1.500 1.500l4.500 4 4.500-4M1.500 6.500l4.500 4 4.500-4" fill="none" stroke="#555" stroke-width="1.300"/></svg>
<div class="a" style="left:631.90px;top:342.10px;font-size:6.5px;color:#555;letter-spacing:0.300px">文章设置</div>
</div>
</div>
</body></html>
